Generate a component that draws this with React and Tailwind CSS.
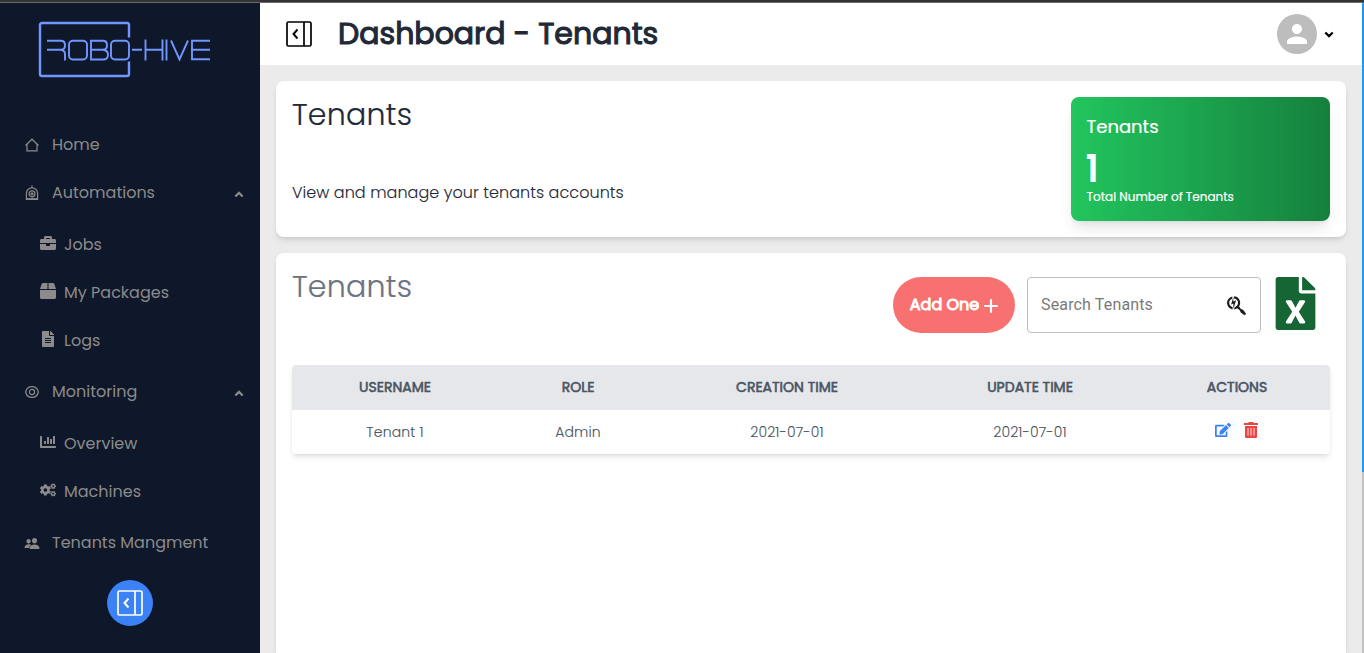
import { FaBriefcase, FaBox, FaFileAlt, FaChartBar, FaCogs, FaSearchengin, FaFileExcel, FaEdit } from "react-icons/fa";
import { IoPeople } from "react-icons/io5";
import { MdPerson } from "react-icons/md";

function Logo() {
  return (
    <svg width="174" height="58" viewBox="0 0 174 58" fill="none" stroke="#7096ff">
      <path d="M91 16.500V4Q91 2 89.500 2H4Q2 2 2 4V53Q2 55 4 55H89Q91 55 91 53V40.500" strokeWidth="2.400" />
      <g strokeWidth="1.900" transform="translate(0 -3)">
        <path d="M9 22.800H23Q27 22.800 27 27.300Q27 31.800 23 31.800H9M22 31.800Q27 32 27 36V42.500" />
        <rect x="31" y="22.800" width="18" height="18.700" rx="4" />
        <path d="M52 22.800H65Q69 22.800 69 27.300Q69 31.800 65 31.800H52M65 31.800Q70 32.300 70 36.700Q70 41.500 65 41.500H53V23" />
        <rect x="73" y="22.800" width="18" height="18.700" rx="4" />
        <path d="M94 31.800H104M107.500 21.500V42.500M124.500 21.500V42.500M107.500 31.800H124M128.500 21.500V42.500M133 22.500L141.500 41.500L150 22.500M172 22.800H154V41.200H172M154 31.800H172" />
      </g>
    </svg>
  );
}

function PanelIcon() {
  return (
    <svg width="26" height="26" viewBox="0 0 26 26" fill="none" stroke="currentColor">
      <rect x="1" y="1" width="24" height="24" rx="1.500" strokeWidth="1.700" />
      <path d="M18 1V25" strokeWidth="1.700" />
      <path d="M11.500 8.500L7.500 13L11.500 17.500" strokeWidth="2" />
    </svg>
  );
}

function HouseIcon() {
  return (
    <svg width="14" height="14" viewBox="0 0 14 14" fill="none" stroke="currentColor" strokeWidth="1.200">
      <path d="M0.500 7.500L7 1.200L13.500 7.500M2 6.300V12.900H12V6.300" />
    </svg>
  );
}

function EyeIcon() {
  return (
    <svg width="14" height="14" viewBox="0 0 14 14" fill="none" stroke="currentColor" strokeWidth="1.200">
      <path d="M0.600 7C1.400 3.500 3.700 1.600 7 1.600S12.600 3.500 13.400 7C12.600 10.500 10.300 12.400 7 12.400S1.400 10.500 0.600 7Z" />
      <circle cx="7" cy="7" r="2.600" />
    </svg>
  );
}

function RobotIcon() {
  return (
    <svg width="14" height="16" viewBox="0 0 14 16" fill="none" stroke="currentColor" strokeWidth="1.200">
      <path d="M7 0.500V3M1.400 14.500V8.500A5.600 5.600 0 0 1 12.600 8.500V14.500Z" />
      <circle cx="7" cy="8.800" r="3" />
      <circle cx="7" cy="8.800" r="1" />
      <path d="M1.400 13.700H12.600" />
    </svg>
  );
}

function Chevron({ className }) {
  return (
    <svg width="10" height="7" viewBox="0 0 10 7" fill="none" stroke="currentColor" strokeWidth="2.200" className={className}>
      <path d="M1.300 5.500L5 1.900L8.700 5.500" />
    </svg>
  );
}

function PlusIcon() {
  return (
    <svg width="14" height="14" viewBox="0 0 14 14" fill="none" stroke="currentColor" strokeWidth="2.200" strokeLinecap="round" className="mt-0.5">
      <path d="M7 1.100V12.900M1.100 7H12.900" />
    </svg>
  );
}

function TrashIcon() {
  return (
    <svg width="14" height="16" viewBox="0 0 14 16" fill="#ef4444">
      <path d="M0 1H4L5 0H9L10 1H14V3H0ZM1 4H13V15Q13 16 12 16H2Q1 16 1 15Z" />
      <path d="M4 6V13.500M7 6V13.500M10 6V13.500" stroke="#fab4b4" strokeWidth="1.400" />
    </svg>
  );
}

function NavItem({ icon, children, open }) {
  return (
    <div className="flex h-12 items-center pl-6 pr-4">
      <span className="flex w-4 justify-center">{icon}</span>
      <span className="ml-3 whitespace-nowrap">{children}</span>
      {open && <Chevron className="ml-auto mt-0.5" />}
    </div>
  );
}

function SubItem({ icon, children }) {
  return (
    <div className="flex h-12 items-center pl-10">
      <span className="-mt-1 flex w-4 justify-center">{icon}</span>
      <span className="ml-2 whitespace-nowrap">{children}</span>
    </div>
  );
}

export default function App() {
  return (
    <div className="flex h-[653px] w-full flex-col overflow-hidden bg-[#ebebeb] font-['Poppins','Inter',sans-serif]">
      <div className="h-[3px] shrink-0 border-b border-[#6b6b6b] bg-[#333]" />
      <div className="flex min-h-0 flex-1">
        <aside className="flex w-[260px] shrink-0 flex-col bg-[#0f172a] text-base text-[#8b8b8b]">
          <div className="flex h-[118px] pl-[38px] pt-[18px]"><Logo /></div>
          <NavItem icon={<HouseIcon />}>Home</NavItem>
          <NavItem icon={<RobotIcon />} open>Automations</NavItem>
          <div className="pt-1">
            <SubItem icon={<FaBriefcase size={16} />}>Jobs</SubItem>
            <SubItem icon={<FaBox size={16} />}>My Packages</SubItem>
            <SubItem icon={<FaFileAlt size={16} />}>Logs</SubItem>
          </div>
          <div className="pt-[3px]"><NavItem icon={<EyeIcon />} open>Monitoring</NavItem></div>
          <div className="pt-1">
            <SubItem icon={<FaChartBar size={16} />}>Overview</SubItem>
            <SubItem icon={<FaCogs size={16} />}>Machines</SubItem>
          </div>
          <div className="pt-[3px]"><NavItem icon={<IoPeople size={17} />}>Tenants Mangment</NavItem></div>
          <button className="mx-auto mt-[13px] flex size-[46px] items-center justify-center rounded-full bg-[#3b82f6] text-white shadow"><PanelIcon /></button>
        </aside>
        <main className="flex min-w-0 flex-1 flex-col">
          <header className="flex h-[62px] shrink-0 items-center bg-white pl-[26px] pr-7 text-black">
            <PanelIcon />
            <h1 className="ml-[26px] whitespace-nowrap text-[30px] font-normal leading-9 text-[#1f2937] [-webkit-text-stroke:1.1px_currentColor]">Dashboard - Tenants</h1>
            <div className="ml-auto flex size-10 items-center justify-center rounded-full bg-[#bdbdbd] text-white"><MdPerson size={30} /></div>
            <Chevron className="ml-[7px] mt-px rotate-180" />
          </header>
          <div className="flex min-h-0 flex-1 flex-col gap-4 px-4 pt-4">
            <section className="flex h-[156px] shrink-0 justify-between rounded-lg bg-white p-4 shadow-md">
              <div className="text-[#1f2937]">
                <h2 className="text-[30px] font-light leading-9 tracking-[0.25px] [-webkit-text-stroke:0.2px_currentColor]">Tenants</h2>
                <p className="mt-12 font-light leading-6 tracking-[0.05px] [-webkit-text-stroke:0.1px_currentColor]">View and manage your tenants accounts</p>
              </div>
              <div className="h-[124px] w-[259px] rounded-lg bg-linear-to-r/srgb from-[#22c55e] to-[#15803d] pl-[15.5px] pt-4 text-white shadow-lg">
                <div className="text-lg leading-7 [-webkit-text-stroke:0.2px_currentColor]">Tenants</div>
                <div className="mt-2 text-4xl font-normal leading-10 [-webkit-text-stroke:1.8px_currentColor]">1</div>
                <div className="text-xs leading-4 [-webkit-text-stroke:0.2px_currentColor]">Total Number of Tenants</div>
              </div>
            </section>
            <section className="flex-1 rounded-t-lg bg-white px-4 pt-4 shadow-md">
              <div className="flex h-24 items-start">
                <h2 className="text-[30px] font-light leading-9 tracking-[0.25px] text-[#6b7280] [-webkit-text-stroke:0.2px_currentColor]">Tenants</h2>
                <button className="ml-auto mt-2 flex h-14 w-[122px] items-center justify-center gap-[5px] rounded-[28px] bg-[#f87171] font-normal text-white">
                  <span className="[-webkit-text-stroke:0.9px_currentColor]">Add One</span><PlusIcon />
                </button>
                <div className="ml-3 mt-2 flex h-14 w-[234px] items-center justify-between rounded border border-[#bdbdbd] px-[13px] font-['Roboto',sans-serif] text-[#7a7a7a]">
                  <span className="tracking-[0.15px]">Search Tenants</span><FaSearchengin size={21} className="text-[#1c1c1c]" />
                </div>
                <FaFileExcel size={53} className="ml-2 mr-2 mt-2 text-[#166534]" />
              </div>
              <table className="w-full table-fixed overflow-hidden rounded text-center text-sm text-[#4b5563] shadow-md">
                <colgroup><col className="w-[206px]" /><col className="w-[160px]" /><col className="w-[258px]" /><col className="w-[228px]" /><col /></colgroup>
                <thead><tr className="h-[45px] bg-[#e5e7eb] [-webkit-text-stroke:0.6px_currentColor]"><th className="pb-0.5 font-normal">USERNAME</th><th className="pb-0.5 font-normal">ROLE</th><th className="pb-0.5 font-normal">CREATION TIME</th><th className="pb-0.5 font-normal">UPDATE TIME</th><th className="pb-0.5 font-normal">ACTIONS</th></tr></thead>
                <tbody><tr className="h-[44px] font-light tracking-[0.15px] [-webkit-text-stroke:0.1px_currentColor]"><td className="pb-px">Tenant 1</td><td className="pb-px">Admin</td><td className="pb-px">2021-07-01</td><td className="pb-px">2021-07-01</td>
                  <td><div className="flex items-center justify-center gap-[13px] pb-1 pr-0.5"><FaEdit size={16} className="text-[#3b82f6]" /><TrashIcon /></div></td></tr></tbody>
              </table>
            </section>
          </div>
        </main>
        <div className="w-0.5 bg-[#c1c1c1]"><div className="h-[469px] bg-[#2196f3]" /></div>
      </div>
    </div>
  );
}
